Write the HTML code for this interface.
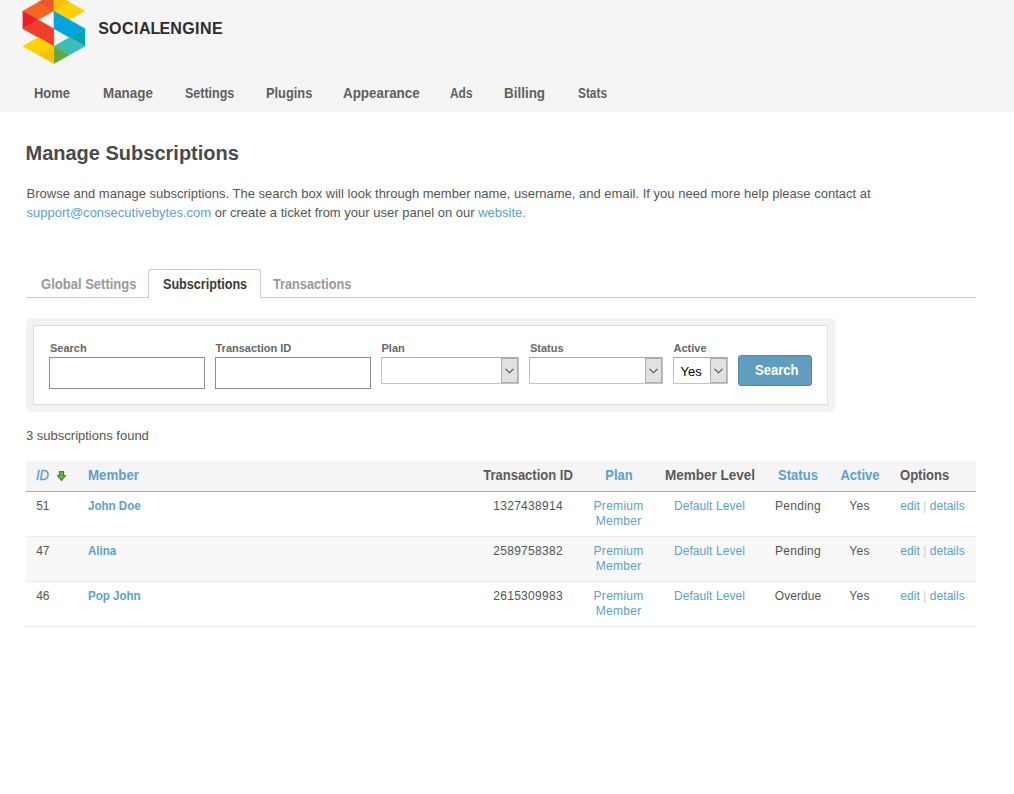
<!DOCTYPE html>
<html>
<head>
<meta charset="utf-8">
<title>Manage Subscriptions</title>
<style>
html,body{margin:0;padding:0;background:#fff;}
body{font-family:"Liberation Sans",Arial,sans-serif;font-size:12px;color:#555;width:1014px;height:794px;overflow:hidden;position:relative;}
a{color:#5ba1cd;text-decoration:none;}
#header{position:absolute;left:0;top:0;width:1014px;height:112px;background:#f5f5f5;}
#logo{position:absolute;left:0;top:0;}
#nav{position:absolute;left:0;top:84px;margin:0;padding:0;list-style:none;white-space:nowrap;}
#nav li{position:absolute;top:0;transform-origin:0 0;font-weight:bold;font-size:14px;line-height:19px;color:#5f5f5f;}
h2{position:absolute;left:25.5px;top:140px;margin:0;font-size:20px;line-height:26px;color:#4a4a4a;font-weight:bold;}
#desc{position:absolute;left:26.5px;top:184px;width:960px;margin:0;font-size:13px;line-height:19px;color:#555;letter-spacing:0.008px;}
#tabs{position:absolute;left:26px;top:269px;width:950px;height:28px;border-bottom:1px solid #ccc;}
#tabs span{position:absolute;top:0;height:28px;line-height:30px;font-size:14px;font-weight:bold;color:#999;white-space:nowrap;transform-origin:0 0;}
#tabs span.active{color:#444;background:#fff;border:1px solid #ccc;border-bottom:1px solid #fff;height:28px;border-radius:3px 3px 0 0;}
#search{position:absolute;left:26px;top:318px;width:809px;height:94px;background:#f3f3f3;border-radius:5px;}
#search .in{position:absolute;left:7px;top:7px;width:793px;height:78px;background:#fff;border:1px solid #dcdcdc;}
#search label{position:absolute;top:24px;font-size:11px;font-weight:bold;color:#666;line-height:13px;white-space:nowrap;}
#search .txt{position:absolute;top:39px;height:30px;border:1px solid #8c8c8c;background:#fff;}
#search .sel{position:absolute;top:39px;height:25px;border:1px solid #c3c3c3;border-top-color:#ababab;background:#fff;}
#search .sel i{position:absolute;right:0;top:0;bottom:0;width:17px;background:#e1e1e1;border:1px solid #adadad;box-sizing:border-box;}
#search .sel svg{position:absolute;right:4px;top:10px;}
#search .btn{position:absolute;left:712px;top:37px;width:74px;height:31px;background:#619dbe;border-radius:3px;border:1px solid #5289ab;box-sizing:border-box;}
#search .btn span{position:absolute;left:15.5px;top:5px;line-height:18px;color:#fff;font-weight:bold;font-size:14px;transform-origin:0 0;transform:scaleX(0.93);}
#count{position:absolute;left:26px;top:427.2px;font-size:13px;line-height:17px;color:#555;letter-spacing:0;}
#tbl{position:absolute;left:26px;top:461px;width:950px;}
#tbl .r{position:absolute;left:0;width:950px;height:44px;border-bottom:1px solid #e9e9e9;font-size:12px;line-height:15px;color:#555;letter-spacing:0.3px;}
#tbl .r.alt{background:#f8f8f8;}
#tbl .h{position:absolute;left:0;top:0;width:950px;height:30px;background:#f5f5f5;border-bottom:1px solid #aaa;font-size:14px;font-weight:bold;color:#5a5a5a;line-height:16px;}
#tbl .h span{position:absolute;top:6px;white-space:nowrap;text-align:center;transform:scaleX(0.93);}
#tbl .h span.l{transform-origin:0 0;text-align:left;}
#tbl .h .b{color:#5ba1cd;}
#tbl .r span{position:absolute;top:7px;text-align:center;}
#tbl .r span.l{text-align:left;white-space:nowrap;}
#tbl .r b{letter-spacing:0;display:inline-block;transform-origin:0 0;transform:scaleX(0.963);}
#tbl .r i{font-style:normal;color:#ccc;}
</style>
</head>
<body>
<div id="header">
<svg id="logo" width="240" height="80" viewBox="0 0 240 80">
<g shape-rendering="geometricPrecision">
<polygon fill="#f26522" stroke="#f26522" stroke-width="0.35" stroke-linejoin="round" points="22.8,11.05 53.9,-6.55 53.9,11.05 38.35,19.85"/>
<polygon fill="#f0532b" stroke="#f0532b" stroke-width="0.35" stroke-linejoin="round" points="38.35,2.25 53.9,-6.55 53.9,11.05"/>
<polygon fill="#ffd200" stroke="#ffd200" stroke-width="0.35" stroke-linejoin="round" points="53.9,-6.55 85.0,11.05 69.45,19.85 53.9,11.05"/>
<polygon fill="#fdbe0f" stroke="#fdbe0f" stroke-width="0.35" stroke-linejoin="round" points="53.9,-6.55 69.45,2.25 53.9,11.05"/>
<polygon fill="#ed1c2e" stroke="#ed1c2e" stroke-width="0.35" stroke-linejoin="round" points="22.8,11.05 38.35,19.85 22.8,28.65"/>
<polygon fill="#ef3e2a" stroke="#ef3e2a" stroke-width="0.35" stroke-linejoin="round" points="38.35,19.85 53.9,28.65 53.9,46.25 22.8,28.65"/>
<polygon fill="#00a4de" stroke="#00a4de" stroke-width="0.35" stroke-linejoin="round" points="53.9,11.05 85.0,28.65 69.45,37.45 53.9,28.65"/>
<polygon fill="#00a4b4" stroke="#00a4b4" stroke-width="0.35" stroke-linejoin="round" points="85.0,28.65 85.0,46.25 69.45,37.45"/>
<polygon fill="#3dbdb5" stroke="#3dbdb5" stroke-width="0.35" stroke-linejoin="round" points="53.9,46.25 69.45,37.45 85.0,46.25 69.45,55.05"/>
<polygon fill="#62a93a" stroke="#62a93a" stroke-width="0.35" stroke-linejoin="round" points="53.9,46.25 69.45,55.05 53.9,63.85"/>
<polygon fill="#ffd200" stroke="#ffd200" stroke-width="0.35" stroke-linejoin="round" points="22.8,46.25 38.35,37.45 53.9,46.25 38.35,55.05"/>
<polygon fill="#fdbe0f" stroke="#fdbe0f" stroke-width="0.35" stroke-linejoin="round" points="53.9,46.25 53.9,63.85 38.35,55.05"/>
</g>
<text x="98.25 108.96 121.88 134.06 138.94 150.40 159.53 170.29 182.37 195.01 199.99 211.98" y="34.3" font-family="Liberation Sans, Arial, sans-serif" font-weight="bold" font-size="16" fill="#2d2d2d">SOCIALENGINE</text>
</svg>
<ul id="nav"><li style="left:34.4px;transform:scaleX(0.926)">Home</li><li style="left:102.7px;transform:scaleX(0.956)">Manage</li><li style="left:184.5px;transform:scaleX(0.893)">Settings</li><li style="left:265.8px;transform:scaleX(0.916)">Plugins</li><li style="left:342.9px;transform:scaleX(0.957)">Appearance</li><li style="left:450.1px;transform:scaleX(0.852)">Ads</li><li style="left:504.1px;transform:scaleX(0.960)">Billing</li><li style="left:577.6px;transform:scaleX(0.846)">Stats</li></ul>
</div>
<h2>Manage Subscriptions</h2>
<p id="desc">Browse and manage subscriptions. The search box will look through member name, username, and email. If you need more help please contact at <a href="#">support@consecutivebytes.com</a> or create a ticket from your user panel on our <a href="#">website.</a></p>
<div id="tabs">
<span class="active" style="left:122px;width:111px"></span>
<span class="t" style="left:14.6px;transform:scaleX(0.93)">Global Settings</span>
<span class="t" style="left:137.4px;transform:scaleX(0.901);color:#3a3a3a">Subscriptions</span>
<span class="t" style="left:246.7px;transform:scaleX(0.908)">Transactions</span>
</div>
<div id="search"><div class="in"></div>
<label style="left:24px">Search</label>
<label style="left:189.5px">Transaction ID</label>
<label style="left:355.5px">Plan</label>
<label style="left:504px">Status</label>
<label style="left:647.5px">Active</label>
<div class="txt" style="left:23px;width:154px"></div>
<div class="txt" style="left:189px;width:154px"></div>
<div class="sel" style="left:355px;width:136px"><i></i><svg width="9" height="6" viewBox="0 0 9 6"><path d="M0.5 0.8 L4.5 4.8 L8.5 0.8" fill="none" stroke="#4a4a4a" stroke-width="1.05"/></svg></div>
<div class="sel" style="left:503px;width:132px"><i></i><svg width="9" height="6" viewBox="0 0 9 6"><path d="M0.5 0.8 L4.5 4.8 L8.5 0.8" fill="none" stroke="#4a4a4a" stroke-width="1.05"/></svg></div>
<div class="sel" style="left:647px;width:53px"><i></i><svg width="9" height="6" viewBox="0 0 9 6"><path d="M0.5 0.8 L4.5 4.8 L8.5 0.8" fill="none" stroke="#4a4a4a" stroke-width="1.05"/></svg><b style="font-weight:normal;position:absolute;left:6.5px;top:6px;font-size:13px;line-height:16px;color:#000">Yes</b></div>
<div class="btn"><span>Search</span></div>
</div>
<div id="count">3 subscriptions found</div>
<div id="tbl">
<div class="h"><span class="l b" style="left:10px;font-style:italic;font-weight:normal;-webkit-text-stroke:0.35px #5ba1cd">ID</span><svg style="position:absolute;left:31px;top:10px" width="9" height="10" viewBox="0 0 9 10"><path d="M2.5 0.5 H6.5 V4.5 H8.5 L4.5 9.5 L0.5 4.5 H2.5 Z" fill="#62b445" stroke="#3a8a22" stroke-width="1.2"/></svg><span class="l b" style="left:61.7px;transform:scaleX(0.95)">Member</span><span style="left:442.3px;width:120px">Transaction ID</span><span class="b" style="left:562.7px;width:60px">Plan</span><span style="left:623.6px;width:120px;transform:scaleX(0.965)">Member Level</span><span class="b" style="left:737.3px;width:70px">Status</span><span class="b" style="left:804.2px;width:60px">Active</span><span class="l" style="left:874px">Options</span></div>
<div class="r" style="top:31px"><span class="l" style="left:10.2px;letter-spacing:0">51</span><span class="l" style="left:61.6px"><a href="#"><b>John Doe</b></a></span><span style="left:452.1px;width:100px">1327438914</span><span style="left:557.6px;width:70px"><a href="#">Premium Member</a></span><span style="left:633.5px;width:100px;letter-spacing:0.08px"><a href="#">Default Level</a></span><span style="left:734.0px;width:76px">Pending</span><span style="left:809.6px;width:48px">Yes</span><span class="l" style="left:874.3px;letter-spacing:0.05px"><a href="#">edit</a> <i>|</i> <a href="#">details</a></span></div>
<div class="r alt" style="top:76px"><span class="l" style="left:10.2px;letter-spacing:0">47</span><span class="l" style="left:61.6px"><a href="#"><b>Alina</b></a></span><span style="left:452.1px;width:100px">2589758382</span><span style="left:557.6px;width:70px"><a href="#">Premium Member</a></span><span style="left:633.5px;width:100px;letter-spacing:0.08px"><a href="#">Default Level</a></span><span style="left:734.0px;width:76px">Pending</span><span style="left:809.6px;width:48px">Yes</span><span class="l" style="left:874.3px;letter-spacing:0.05px"><a href="#">edit</a> <i>|</i> <a href="#">details</a></span></div>
<div class="r" style="top:121px"><span class="l" style="left:10.2px;letter-spacing:0">46</span><span class="l" style="left:61.6px"><a href="#"><b>Pop John</b></a></span><span style="left:452.1px;width:100px">2615309983</span><span style="left:557.6px;width:70px"><a href="#">Premium Member</a></span><span style="left:633.5px;width:100px;letter-spacing:0.08px"><a href="#">Default Level</a></span><span style="left:734.0px;width:76px;letter-spacing:0.05px">Overdue</span><span style="left:809.6px;width:48px">Yes</span><span class="l" style="left:874.3px;letter-spacing:0.05px"><a href="#">edit</a> <i>|</i> <a href="#">details</a></span></div>
</div>

</body>
</html>
